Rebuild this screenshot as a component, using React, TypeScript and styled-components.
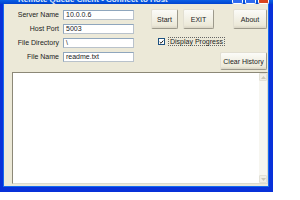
import React from 'react';
import styled, { createGlobalStyle } from 'styled-components';

const GlobalStyle = createGlobalStyle`
  html, body {
    margin: 0;
    padding: 0;
    background: #ffffff;
  }
  body {
    font-family: 'Liberation Sans', Arial, sans-serif;
    font-size: 7px;
    color: #000000;
  }
`;

const fields = [
  { label: 'Server Name', value: '10.0.0.6' },
  { label: 'Host Port', value: '5003' },
  { label: 'File Directory', value: '\\' },
  { label: 'File Name', value: 'readme.txt' }
];

function App() {
  return (
    <>
      <GlobalStyle />
      <S.Window>
        <S.TitleBar>
          <S.TitleText>Remote Queue Client - Connect to Host</S.TitleText>
          <S.TitleButtons>
            <S.TitleButton />
            <S.TitleButton />
            <S.TitleButton close />
          </S.TitleButtons>
        </S.TitleBar>
        <S.Client>
          <S.Top>
            <S.Form>
              {fields.map((f) => (
                <React.Fragment key={f.label}>
                  <S.Label>{f.label}</S.Label>
                  <S.Input>{f.value}</S.Input>
                </React.Fragment>
              ))}
            </S.Form>
            <S.Controls>
              <S.ButtonRow>
                <S.Button w={27}>Start</S.Button>
                <S.Button w={31}>EXIT</S.Button>
                <S.Spacer />
                <S.Button w={34}>About</S.Button>
              </S.ButtonRow>
              <S.CheckRow>
                <S.CheckBox>
                  <svg width="6" height="6" viewBox="0 0 7 7">
                    <path d="M1 3.5 L2.8 5.3 L6 1.5" stroke="#1a1a1a" strokeWidth="1.4" fill="none" />
                  </svg>
                </S.CheckBox>
                <S.CheckLabel>Display Progress</S.CheckLabel>
              </S.CheckRow>
              <S.ClearRow>
                <S.Button w={47} h={18}>Clear History</S.Button>
              </S.ClearRow>
            </S.Controls>
          </S.Top>
          <S.History>
            <S.HistoryText />
            <S.ScrollBar>
              <S.ScrollArrow>
                <svg width="5" height="3" viewBox="0 0 5 3">
                  <path d="M0 3 L2.5 0 L5 3 Z" fill="#c9c7ba" />
                </svg>
              </S.ScrollArrow>
              <S.ScrollArrow>
                <svg width="5" height="3" viewBox="0 0 5 3">
                  <path d="M0 0 L2.5 3 L5 0 Z" fill="#c9c7ba" />
                </svg>
              </S.ScrollArrow>
            </S.ScrollBar>
          </S.History>
        </S.Client>
      </S.Window>
    </>
  );
}

const S: {
  Window: any;
  TitleBar: any;
  TitleText: any;
  TitleButtons: any;
  TitleButton: any;
  Client: any;
  Top: any;
  Form: any;
  Label: any;
  Input: any;
  Controls: any;
  ButtonRow: any;
  Spacer: any;
  Button: any;
  CheckRow: any;
  CheckBox: any;
  CheckLabel: any;
  ClearRow: any;
  History: any;
  HistoryText: any;
  ScrollBar: any;
  ScrollArrow: any;
} = {
  Window: styled.div`
    width: 273px;
    height: 192px;
    display: flex;
    flex-direction: column;
    box-sizing: border-box;
    background: #ece9d8;
    border-left: 3px solid #0831d9;
    border-right: 4px solid #0831d9;
    border-bottom: 5px solid #0831d9;
    box-shadow: inset 1px 0 0 #166aee, inset -1px 0 0 #166aee, inset 0 -1px 0 #166aee;
  `,
  TitleBar: styled.div`
    height: 4px;
    margin: 0 -4px 0 -3px;
    display: flex;
    align-items: flex-end;
    justify-content: space-between;
    overflow: hidden;
    background: linear-gradient(to bottom, #0a5fe6, #0043cf);
  `,
  TitleText: styled.div`
    color: #ffffff;
    font-weight: bold;
    font-size: 8px;
    line-height: 8px;
    padding-left: 18px;
    margin-bottom: 0;
    white-space: nowrap;
    opacity: 0.85;
  `,
  TitleButtons: styled.div`
    display: flex;
    gap: 2px;
    padding-right: 4px;
    height: 4px;
  `,
  TitleButton: styled.div`
    width: 11px;
    height: 4px;
    box-sizing: border-box;
    border: 1px solid #ffffff;
    border-top: none;
    border-radius: 0 0 2px 2px;
    background: ${({ close }: { close?: boolean }) => (close ? '#d9451f' : '#2f6bf0')};
  `,
  Client: styled.div`
    flex: 1;
    display: flex;
    flex-direction: column;
    padding: 5px 1px 3px 9px;
  `,
  Top: styled.div`
    display: flex;
    height: 62px;
  `,
  Form: styled.div`
    display: grid;
    grid-template-columns: 47px 71px;
    grid-auto-rows: 10px;
    row-gap: 4px;
    column-gap: 4px;
    padding-top: 1px;
  `,
  Label: styled.div`
    text-align: right;
    line-height: 10px;
    white-space: nowrap;
    color: #222222;
  `,
  Input: styled.div`
    box-sizing: border-box;
    background: #ffffff;
    border: 1px solid #b9c2cb;
    border-top-color: #8fa6bd;
    border-left-color: #8fa6bd;
    line-height: 8px;
    padding-left: 2px;
    white-space: nowrap;
    color: #222222;
  `,
  Controls: styled.div`
    display: flex;
    flex-direction: column;
    margin-left: 17px;
    width: 116px;
  `,
  ButtonRow: styled.div`
    display: flex;
    gap: 5px;
  `,
  Spacer: styled.div`
    flex: 1;
  `,
  Button: styled.div`
    width: ${({ w }: { w: number; h?: number }) => w}px;
    height: ${({ h }: { w: number; h?: number }) => h || 20}px;
    box-sizing: border-box;
    display: flex;
    align-items: center;
    justify-content: center;
    white-space: nowrap;
    color: #222222;
    border: 1px solid #9d9a8c;
    border-top-color: #e2dfd2;
    border-left-color: #e2dfd2;
    border-radius: 2px;
    background: linear-gradient(to bottom, #fbfbf8, #ece9d8 85%, #d9d4c5);
  `,
  CheckRow: styled.div`
    display: flex;
    align-items: center;
    gap: 3px;
    margin-top: 8px;
    padding-left: 7px;
    height: 9px;
  `,
  CheckBox: styled.div`
    width: 7px;
    height: 7px;
    box-sizing: border-box;
    border: 1px solid #1c5180;
    background: #ffffff;
    display: flex;
    align-items: center;
    justify-content: center;
  `,
  CheckLabel: styled.div`
    border: 1px dotted #666666;
    line-height: 7px;
    padding: 0 1px;
    white-space: nowrap;
    color: #222222;
  `,
  ClearRow: styled.div`
    display: flex;
    justify-content: flex-end;
    margin-top: 6px;
  `,
  History: styled.div`
    flex: 1;
    display: flex;
    margin-top: 1px;
    box-sizing: border-box;
    border: 1px solid #dcdad0;
    border-top-color: #8c8877;
    border-left-color: #8c8877;
    background: #ffffff;
  `,
  HistoryText: styled.div`
    flex: 1;
  `,
  ScrollBar: styled.div`
    width: 8px;
    display: flex;
    flex-direction: column;
    justify-content: space-between;
    background: #f7f6f0;
  `,
  ScrollArrow: styled.div`
    height: 8px;
    display: flex;
    align-items: center;
    justify-content: center;
    box-sizing: border-box;
    border: 1px solid #e3e1d6;
    border-radius: 1px;
    background: #f1efe6;
  `
};

export default App;
